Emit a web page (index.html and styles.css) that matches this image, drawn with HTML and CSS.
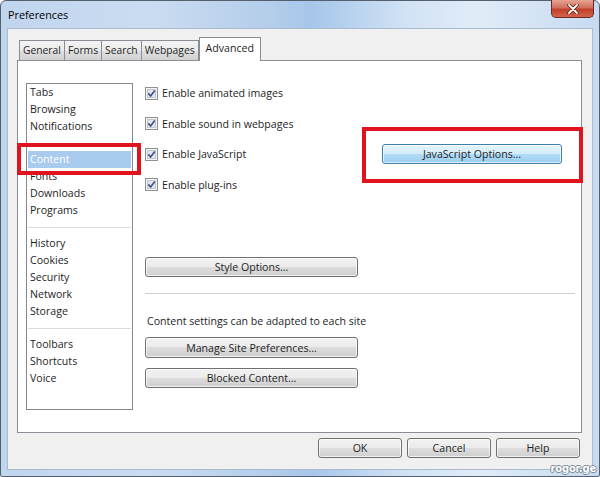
FILE: index.html
```html
<!DOCTYPE html>
<html>
<head>
<meta charset="utf-8">
<link rel="stylesheet" href="styles.css">
</head>
<body>
<div class="window">
  <div class="titlebar">
    <span class="title">Preferences</span>
    <div class="close">
      <svg width="14" height="10" viewBox="0 0 14 10"><path d="M3 1 L11 9 M11 1 L3 9" stroke="#5a1a10" stroke-width="3.4" stroke-linecap="round"/><path d="M3 1 L11 9 M11 1 L3 9" stroke="#ffffff" stroke-width="1.8" stroke-linecap="round"/></svg>
    </div>
  </div>
  <div class="client">
    <div class="tabs">
      <div class="tab">General</div>
      <div class="tab">Forms</div>
      <div class="tab">Search</div>
      <div class="tab">Webpages</div>
      <div class="tab active">Advanced</div>
    </div>
    <div class="panel">
      <div class="list">
        <div class="item">Tabs</div>
        <div class="item">Browsing</div>
        <div class="item">Notifications</div>
        <div class="sep"></div>
        <div class="item selected">Content</div>
        <div class="item">Fonts</div>
        <div class="item">Downloads</div>
        <div class="item">Programs</div>
        <div class="sep"></div>
        <div class="item">History</div>
        <div class="item">Cookies</div>
        <div class="item">Security</div>
        <div class="item">Network</div>
        <div class="item">Storage</div>
        <div class="sep"></div>
        <div class="item">Toolbars</div>
        <div class="item">Shortcuts</div>
        <div class="item">Voice</div>
      </div>
      <div class="main">
        <div class="row">
          <svg class="cb" width="13" height="13" viewBox="0 0 13 13"><rect x="0.5" y="0.5" width="12" height="12" fill="#f4f4f4" stroke="#8e8f8f"/><rect x="2.5" y="2.5" width="8" height="8" fill="#e2e6ec" stroke="#c2c8d2"/><path d="M3.3 6.4 L5.6 9 L9.8 3.4" fill="none" stroke="#3d4f87" stroke-width="1.6"/></svg>
          <span class="label">Enable animated images</span>
        </div>
        <div class="row">
          <svg class="cb" width="13" height="13" viewBox="0 0 13 13"><rect x="0.5" y="0.5" width="12" height="12" fill="#f4f4f4" stroke="#8e8f8f"/><rect x="2.5" y="2.5" width="8" height="8" fill="#e2e6ec" stroke="#c2c8d2"/><path d="M3.3 6.4 L5.6 9 L9.8 3.4" fill="none" stroke="#3d4f87" stroke-width="1.6"/></svg>
          <span class="label">Enable sound in webpages</span>
        </div>
        <div class="row">
          <svg class="cb" width="13" height="13" viewBox="0 0 13 13"><rect x="0.5" y="0.5" width="12" height="12" fill="#f4f4f4" stroke="#8e8f8f"/><rect x="2.5" y="2.5" width="8" height="8" fill="#e2e6ec" stroke="#c2c8d2"/><path d="M3.3 6.4 L5.6 9 L9.8 3.4" fill="none" stroke="#3d4f87" stroke-width="1.6"/></svg>
          <span class="label">Enable JavaScript</span>
          <div class="btn blue js">JavaScript Options...</div>
        </div>
        <div class="row">
          <svg class="cb" width="13" height="13" viewBox="0 0 13 13"><rect x="0.5" y="0.5" width="12" height="12" fill="#f4f4f4" stroke="#8e8f8f"/><rect x="2.5" y="2.5" width="8" height="8" fill="#e2e6ec" stroke="#c2c8d2"/><path d="M3.3 6.4 L5.6 9 L9.8 3.4" fill="none" stroke="#3d4f87" stroke-width="1.6"/></svg>
          <span class="label">Enable plug-ins</span>
        </div>
        <div class="btn wide style-btn">Style Options...</div>
        <div class="hr"></div>
        <div class="note">Content settings can be adapted to each site</div>
        <div class="btn wide manage">Manage Site Preferences...</div>
        <div class="btn wide blocked">Blocked Content...</div>
      </div>
    </div>
    <div class="footer">
      <div class="btn foot">OK</div>
      <div class="btn foot">Cancel</div>
      <div class="btn foot">Help</div>
    </div>
  </div>
  <div class="mark mark-content"></div>
  <div class="mark mark-js"></div>
  <div class="watermark">rogor.ge</div>
</div>
</body>
</html>
```

FILE: styles.css
```css
* { box-sizing: border-box; }
html, body { margin: 0; padding: 0; }
body {
  width: 600px;
  height: 477px;
  overflow: hidden;
  font-family: "Open Sans", "Noto Sans", sans-serif;
  font-size: 10.6px;
  color: #1e1e1e;
}
.window {
  position: relative;
  width: 600px;
  height: 477px;
  display: flex;
  flex-direction: column;
  border: 1px solid #55606e;
  border-radius: 6px 6px 2px 2px;
  background: linear-gradient(90deg, #c0d5ee 0%, #cadcf1 25%, #b4cdea 45%, #a6c6ea 52%, #d2e3f5 68%, #e0ecf8 80%, #c6daf0 100%);
}
.titlebar {
  height: 27px;
  display: flex;
  align-items: flex-start;
  padding-right: 5px;
}
.title {
  margin: 6px 0 0 7px;
  font-size: 10.8px;
  color: #000;
}
.close {
  margin-left: auto;
  width: 43px;
  height: 18px;
  margin-top: -1px;
  border: 1px solid #6b2a22;
  border-top: none;
  border-radius: 0 0 5px 5px;
  background: linear-gradient(#e8a493 0%, #d0705e 45%, #c0402c 55%, #d4634a 100%);
  display: flex;
  align-items: center;
  justify-content: center;
}
.client {
  flex: 1;
  margin: 0 6px 6px 6px;
  background: #f0f0f0;
  border: 1px solid #a9bbd1;
  padding: 8px 10px 0 9px;
  display: flex;
  flex-direction: column;
}
.tabs {
  display: flex;
  height: 23px;
  padding-left: 2px;
  position: relative;
  z-index: 1;
}
.tab {
  height: 20px;
  margin-top: 3px;
  padding: 0 3px;
  border: 1px solid #8a8d96;
  border-bottom: none;
  margin-right: -1px;
  background: linear-gradient(#f3f3f3, #ebebeb 50%, #dedede 50%, #d2d2d2);
  line-height: 18px;
  font-size: 10.3px;
  white-space: nowrap;
}
.tab.active {
  height: 24px;
  margin-top: 0;
  background: #ffffff;
  line-height: 21px;
  padding: 0 6px;
  margin-left: 1px;
  font-size: 10.6px;
}
.panel {
  width: 565px;
  height: 373px;
  background: #ffffff;
  border: 1px solid #8a8d96;
  display: flex;
  padding: 22px 0 0 8px;
}
.list {
  width: 107px;
  height: 327px;
  border: 1px solid #828790;
  padding: 0 1px;
}
.item {
  height: 17px;
  line-height: 17px;
  padding-left: 2px;
}
.item.selected {
  background: #a8cbee;
  color: #ffffff;
}
.sep {
  height: 16px;
  display: flex;
  align-items: center;
}
.sep::before {
  content: "";
  display: block;
  width: 100%;
  height: 1px;
  background: #dcdcdc;
}
.main {
  width: 430px;
  margin-left: 12px;
  display: flex;
  flex-direction: column;
}
.row {
  height: 20px;
  margin-bottom: 10.5px;
  display: flex;
  align-items: center;
}
.cb { flex: none; }
.label { margin-left: 4px; }
.btn {
  height: 20px;
  border: 1px solid #707070;
  border-radius: 3px;
  background: linear-gradient(#f2f2f2, #ebebeb 50%, #dddddd 50%, #cfcfcf);
  box-shadow: inset 0 0 0 1px rgba(255,255,255,0.7);
  display: flex;
  align-items: center;
  justify-content: center;
  color: #1e1e1e;
}
.btn.blue {
  border-color: #3c7fb1;
  background: linear-gradient(#e5f4fc, #d3ecfb 50%, #b3dcf6 50%, #98cdef);
}
.js {
  width: 180px;
  margin-left: auto;
  margin-right: 13px;
}
.wide { width: 213px; }
.style-btn { margin-top: 52px; }
.hr {
  height: 1px;
  background: #cfcfcf;
  margin-top: 16px;
}
.note {
  margin-top: 19px;
  height: 16px;
  line-height: 16px;
  padding-left: 2px;
}
.manage { margin-top: 8px; height: 21px; }
.blocked { margin-top: 10px; }
.footer {
  display: flex;
  justify-content: flex-end;
  gap: 5px;
  margin-top: 5px;
  padding-right: 2px;
}
.foot { width: 84px; }
.mark {
  position: absolute;
  border: 4px solid #e0141e;
}
.mark-content {
  left: 16px;
  top: 142px;
  width: 124px;
  height: 32px;
}
.mark-js {
  left: 361px;
  top: 126px;
  width: 221px;
  height: 56px;
}
.watermark {
  position: absolute;
  right: 3px;
  bottom: 2px;
  font-family: "DejaVu Sans", sans-serif;
  font-weight: bold;
  font-size: 10px;
  color: #ffffff;
  text-shadow: 1px 0 0 #7a8a9a, -1px 0 0 #7a8a9a, 0 1px 0 #7a8a9a, 0 -1px 0 #7a8a9a;
  letter-spacing: -0.2px;
}
```
